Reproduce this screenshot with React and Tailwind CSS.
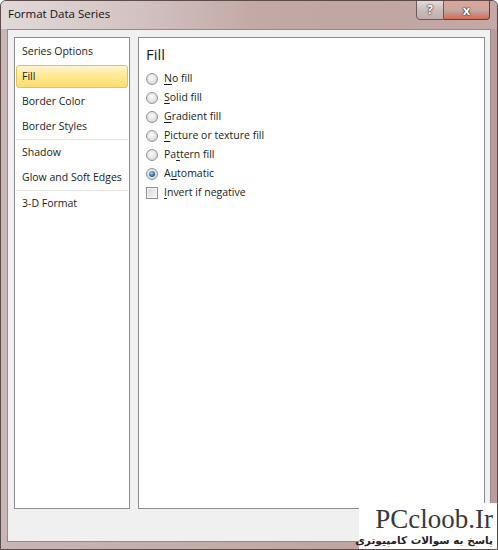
import React from 'react';

const sidebarItems = [
  { label: 'Series Options' },
  { label: 'Fill', selected: true },
  { label: 'Border Color' },
  { label: 'Border Styles', divider: true },
  { label: 'Shadow' },
  { label: 'Glow and Soft Edges', divider: true },
  { label: '3-D Format' },
];

// access keys are underlined like in the Win32 dialog
const fillOptions = [
  { pre: '', key: 'N', post: 'o fill', type: 'radio' },
  { pre: '', key: 'S', post: 'olid fill', type: 'radio' },
  { pre: '', key: 'G', post: 'radient fill', type: 'radio' },
  { pre: '', key: 'P', post: 'icture or texture fill', type: 'radio' },
  { pre: 'Pa', key: 't', post: 'tern fill', type: 'radio' },
  { pre: 'A', key: 'u', post: 'tomatic', type: 'radio', checked: true },
  { pre: '', key: 'I', post: 'nvert if negative', type: 'checkbox' },
];

const Radio = ({ checked }) => (
  <span className="w-[12px] h-[12px] rounded-full border border-[#939393] bg-[radial-gradient(circle_at_45%_40%,#fbfbfb,#e6e6e6_45%,#c9c9c9)] flex items-center justify-center shrink-0">
    {checked && (
      <span className="w-[6px] h-[6px] rounded-full bg-[radial-gradient(circle_at_40%_35%,#a8d8f8,#2c6da6_55%,#123c66)]" />
    )}
  </span>
);

const Checkbox = () => (
  <span className="w-[12px] h-[12px] border border-[#8f8f8f] bg-gradient-to-br from-[#d8d8d8] to-[#f8f8f8] shadow-[inset_0_0_0_1px_#f4f4f4] shrink-0" />
);

export default function App() {
  return (
    <div className="relative w-[498px] h-[550px] overflow-hidden border border-[#5b4b4a] rounded-t-[6px] bg-gradient-to-r from-[#c8b6b4] via-[#c3aaa7] to-[#b99d9a] flex flex-col font-['Open_Sans',sans-serif] text-[#000]">
      {/* Title bar */}
      <div className="h-[28px] flex items-start bg-gradient-to-r from-[#e1d9d8] via-[#d3c4c2_45%] to-[#c4aaa7]">
        <div className="self-center pl-[7px] pb-[2px] text-[11.5px] text-[#111]">Format Data Series</div>
        <div className="ml-auto mr-[7px] -mt-px flex h-[20px]">
          <div className="w-[28px] h-full border border-[#6a5a59] rounded-bl-[4px] bg-gradient-to-b from-[#e4dcdb] via-[#cbbcba] to-[#bfaeac] flex items-center justify-center">
            <span className="text-white font-bold text-[12px] leading-none [text-shadow:0_0_2px_#222,0_0_1px_#000]">?</span>
          </div>
          <div className="w-[46px] h-full border border-l-0 border-[#6a3a33] rounded-br-[4px] bg-gradient-to-b from-[#e6a294] via-[#c9462f_55%] to-[#d66b52] flex items-center justify-center">
            <span className="text-white font-bold text-[13px] leading-none [text-shadow:0_0_2px_#3a0a05,0_0_1px_#000]">x</span>
          </div>
        </div>
      </div>

      {/* Client area */}
      <div className="flex-1 mx-[6px] mb-[7px] border border-[#9a8785] bg-[#f0f0f0] flex pl-[6px] pr-[5px] pt-[7px] pb-[32px] gap-[8px]">
        {/* Category list */}
        <div className="w-[116px] border border-[#8a8d92] bg-white pt-px">
          {sidebarItems.map((item) => (
            <div key={item.label}>
              <div className="h-[25px] px-px py-px">
                <div
                  className={`h-[23px] flex items-center px-[5px] text-[10.5px] text-[#1b1b1b] rounded-[3px] border ${
                    item.selected
                      ? 'border-[#e2c162] bg-gradient-to-b from-[#fff5cf] via-[#ffe88f] to-[#fedc6c]'
                      : 'border-transparent'
                  }`}
                >
                  {item.label}
                </div>
              </div>
              {item.divider && <div className="h-px mx-px bg-[#e6e6e6]" />}
            </div>
          ))}
        </div>

        {/* Fill page */}
        <div className="flex-1 border border-[#8a8d92] bg-white pl-[7px]">
          <div className="mt-[6px] h-[20px] leading-[20px] text-[15px] text-[#1a1a1a]">Fill</div>
          <div className="mt-[5px] flex flex-col">
            {fillOptions.map((opt) => (
              <div key={opt.post} className="h-[19px] flex items-center gap-[6px] text-[10.5px] text-[#1b1b1b]">
                {opt.type === 'radio' ? <Radio checked={opt.checked} /> : <Checkbox />}
                <span>
                  {opt.pre}
                  <u className="underline-offset-[2px]">{opt.key}</u>
                  {opt.post}
                </span>
              </div>
            ))}
          </div>
        </div>
      </div>

      {/* Site watermark */}
      <div className="absolute right-0 bottom-0 w-[138px] h-[46px] bg-white flex flex-col items-end pr-[4px]">
        <div className="font-['Liberation_Serif',serif] text-[27px] leading-[26px] text-[#383838] mt-[3px] whitespace-nowrap">PCcloob.Ir</div>
        <div dir="rtl" className="font-['DejaVu_Sans',sans-serif] font-bold text-[10.5px] leading-[16px] text-[#222] whitespace-nowrap">پاسخ به سوالات کامپیوتری</div>
      </div>
    </div>
  );
}
